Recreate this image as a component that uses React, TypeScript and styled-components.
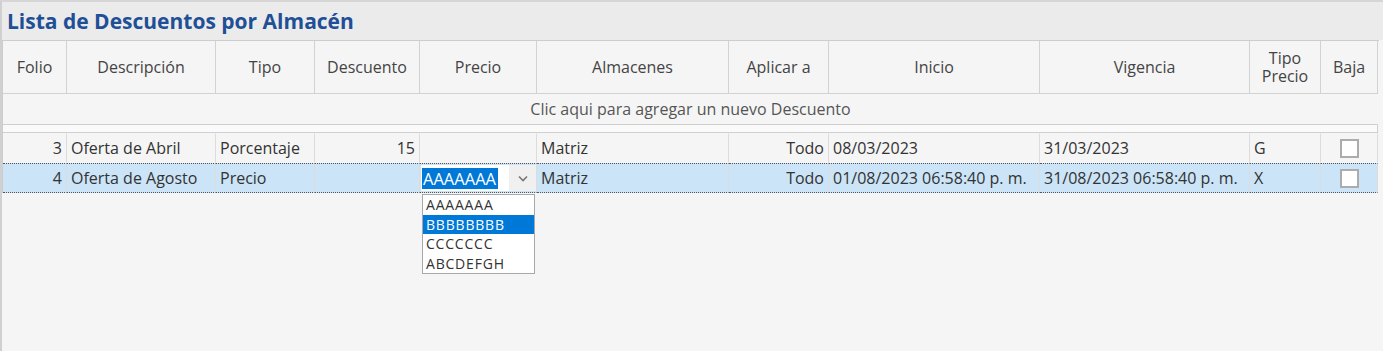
import styled, { createGlobalStyle } from "styled-components";

const GlobalStyle = createGlobalStyle`
  html, body {
    margin: 0;
    background: #f5f5f5;
  }
  body {
    font-family: "Open Sans", "Liberation Sans", sans-serif;
    color: #333;
  }
`;

const COLS = "64px 149px 99px 105px 117px 192px 100px 211px 210px 71px 57px";

const Panel = styled.div`
  width: 1383px;
  height: 351px;
  box-sizing: border-box;
  border-top: 2px solid #d6d6d6;
  border-left: 2px solid #d0d0d0;
  background: #f5f5f5;
  overflow: hidden;
`;

const TitleBar = styled.div`
  height: 38px;
  background: #ebebeb;
  display: flex;
  align-items: center;
  padding-left: 5px;
  font-size: 21px;
  font-weight: 700;
  color: #1f4f96;
`;

const Grid = styled.div`
  width: 1376px;
  display: grid;
  grid-template-columns: ${COLS};
  border-top: 1px solid #cdcdcd;
  border-left: 1px solid #cdcdcd;
  font-size: 16px;
`;

const HeaderCell = styled.div`
  height: 53px;
  box-sizing: border-box;
  border-right: 1px solid #d2d2d2;
  border-bottom: 1px solid #d2d2d2;
  display: flex;
  align-items: center;
  justify-content: center;
  text-align: center;
  white-space: pre-line;
  line-height: 18px;
  color: #444;
`;

const NewRow = styled.div`
  grid-column: 1 / -1;
  height: 30px;
  display: flex;
  align-items: center;
  justify-content: center;
  color: #555;
`;

const Strip = styled.div`
  grid-column: 1 / -1;
  height: 9px;
  box-sizing: border-box;
  border: 1px solid #cfcfcf;
  border-left: none;
  background: #fafafa;
`;

const Cell = styled.div<{ $align?: "left" | "right" | "center"; $selected?: boolean }>`
  position: relative;
  height: 30px;
  box-sizing: border-box;
  padding: 0 4px;
  display: flex;
  align-items: center;
  justify-content: ${(p) =>
    p.$align === "right" ? "flex-end" : p.$align === "center" ? "center" : "flex-start"};
  white-space: nowrap;
  border-right: 1px solid #dcdcdc;
  background: ${(p) => (p.$selected ? "#cce4f7" : "transparent")};
  border-top: 1px ${(p) => (p.$selected ? "dotted #555" : "solid transparent")};
  border-bottom: 1px ${(p) => (p.$selected ? "dotted #555" : "solid transparent")};
  color: #333;
`;

const CheckBox = styled.span`
  width: 19px;
  height: 19px;
  box-sizing: border-box;
  border: 2px solid #acacac;
  background: #fff;
`;

const Editor = styled.div`
  position: absolute;
  left: 1px;
  right: 0;
  top: 1px;
  bottom: 1px;
  display: flex;
  background: #fff;
`;

const EditorText = styled.div`
  flex: 1;
  display: flex;
  align-items: center;
  padding-left: 1px;
`;

const Selection = styled.span`
  background: #0078d7;
  color: #fff;
  padding: 0 2px 0 1px;
  line-height: 21px;
  font-size: 16.5px;
`;

const DropButton = styled.div`
  width: 27px;
  display: flex;
  align-items: center;
  justify-content: center;
  background: #f0f0f0;
`;

const DropList = styled.div`
  position: absolute;
  left: 2px;
  top: 30px;
  width: 113px;
  box-sizing: border-box;
  border: 1px solid #a8a8a8;
  background: #fff;
  z-index: 2;
  font-size: 14px;
  letter-spacing: 0.8px;
`;

const DropItem = styled.div<{ $active?: boolean }>`
  height: 19.5px;
  line-height: 19.5px;
  padding-left: 3px;
  background: ${(p) => (p.$active ? "#0078d7" : "transparent")};
  color: ${(p) => (p.$active ? "#fff" : "#333")};
`;

const headers = [
  "Folio",
  "Descripción",
  "Tipo",
  "Descuento",
  "Precio",
  "Almacenes",
  "Aplicar a",
  "Inicio",
  "Vigencia",
  "Tipo\nPrecio",
  "Baja",
];

const Chevron = () => (
  <svg width="10" height="7" viewBox="0 0 10 7">
    <path d="M1 1.5 L5 5.5 L9 1.5" fill="none" stroke="#777" strokeWidth="1.6" />
  </svg>
);

export default function App() {
  return (
    <>
      <GlobalStyle />
      <Panel>
        <TitleBar>Lista de Descuentos por Almacén</TitleBar>
        <Grid>
          {headers.map((h) => (
            <HeaderCell key={h}>{h}</HeaderCell>
          ))}
          <NewRow>Clic aqui para agregar un nuevo Descuento</NewRow>
          <Strip />

          <Cell $align="right">3</Cell>
          <Cell>Oferta de Abril</Cell>
          <Cell>Porcentaje</Cell>
          <Cell $align="right">15</Cell>
          <Cell />
          <Cell>Matriz</Cell>
          <Cell $align="right">Todo</Cell>
          <Cell>08/03/2023</Cell>
          <Cell>31/03/2023</Cell>
          <Cell>G</Cell>
          <Cell $align="center">
            <CheckBox />
          </Cell>

          <Cell $align="right" $selected>4</Cell>
          <Cell $selected>Oferta de Agosto</Cell>
          <Cell $selected>Precio</Cell>
          <Cell $selected />
          <Cell $selected>
            <Editor>
              <EditorText>
                <Selection>AAAAAAA</Selection>
              </EditorText>
              <DropButton>
                <Chevron />
              </DropButton>
            </Editor>
            <DropList>
              <DropItem>AAAAAAA</DropItem>
              <DropItem $active>BBBBBBBB</DropItem>
              <DropItem>CCCCCCC</DropItem>
              <DropItem>ABCDEFGH</DropItem>
            </DropList>
          </Cell>
          <Cell $selected>Matriz</Cell>
          <Cell $align="right" $selected>Todo</Cell>
          <Cell $selected>01/08/2023 06:58:40 p. m.</Cell>
          <Cell $selected>31/08/2023 06:58:40 p. m.</Cell>
          <Cell $selected>X</Cell>
          <Cell $align="center" $selected>
            <CheckBox />
          </Cell>
        </Grid>
      </Panel>
    </>
  );
}
